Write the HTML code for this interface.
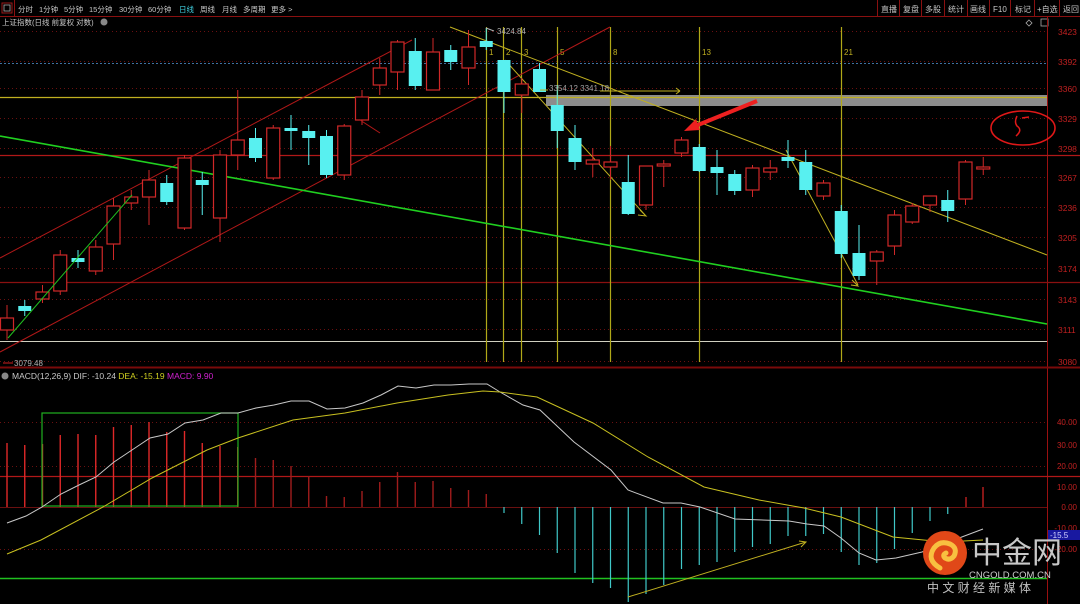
<!DOCTYPE html>
<html><head><meta charset="utf-8"><style>
html,body{margin:0;padding:0;background:#000;width:1080px;height:604px;overflow:hidden;font-family:"Liberation Sans","Noto Sans CJK SC",sans-serif}
svg{position:absolute;left:0;top:0}
</style></head><body>
<svg id="s" width="1080" height="604" xmlns="http://www.w3.org/2000/svg" font-family="Liberation Sans, Noto Sans CJK SC, sans-serif">
<rect width="1080" height="604" fill="#000"/>
<line x1="0" y1="16.5" x2="1080" y2="16.5" stroke="#8a1010"/>
<rect x="2" y="3" width="10" height="10" fill="none" stroke="#9a1a1a"/>
<rect x="4" y="5" width="6" height="6" fill="none" stroke="#aaa" stroke-width="0.8"/>
<line x1="14.5" y1="0" x2="14.5" y2="16" stroke="#8a1010"/>
<g font-size="7.5" fill="#c8c8c8">
<text x="18" y="12">分时</text><text x="39" y="12">1分钟</text><text x="64" y="12">5分钟</text><text x="89" y="12">15分钟</text><text x="119" y="12">30分钟</text><text x="148" y="12">60分钟</text><text x="179" y="12" fill="#40d0e0">日线</text><text x="200" y="12">周线</text><text x="222" y="12">月线</text><text x="243" y="12">多周期</text><text x="271" y="12">更多 &gt;</text>
<text x="2" y="25">上证指数(日线 前复权 对数)</text>
</g>
<circle cx="104" cy="22" r="3.5" fill="#888"/>
<g font-size="8" fill="#c8c8c8">
<text x="881" y="12">直播</text><text x="903" y="12">复盘</text><text x="925" y="12">多股</text><text x="948" y="12">统计</text><text x="970" y="12">画线</text><text x="993" y="12">F10</text><text x="1015" y="12">标记</text><text x="1037" y="12">+自选</text><text x="1063" y="12">返回</text>
</g>
<g stroke="#8a1010"><line x1="877.5" y1="0" x2="877.5" y2="16"/><line x1="899.5" y1="0" x2="899.5" y2="16"/><line x1="921.5" y1="0" x2="921.5" y2="16"/><line x1="944.5" y1="0" x2="944.5" y2="16"/><line x1="967.5" y1="0" x2="967.5" y2="16"/><line x1="989.5" y1="0" x2="989.5" y2="16"/><line x1="1010.5" y1="0" x2="1010.5" y2="16"/><line x1="1034.5" y1="0" x2="1034.5" y2="16"/><line x1="1059.5" y1="0" x2="1059.5" y2="16"/></g>
<path d="M1029 20 l3 3 -3 3 -3 -3z" fill="none" stroke="#aaa" stroke-width="0.8"/>
<rect x="1041" y="19" width="7" height="7" fill="none" stroke="#aaa" stroke-width="0.8"/>
<g id="grid"></g>
<g id="g"></g>
</svg>
<script>
var NS="http://www.w3.org/2000/svg",G=document.getElementById('g'),GR=document.getElementById('grid');
function el(t,a,p){var e=document.createElementNS(NS,t);for(var k in a)e.setAttribute(k,a[k]);(p||G).appendChild(e);return e}
function L(x1,y1,x2,y2,c,w,d,p){var a={x1:x1,y1:y1,x2:x2,y2:y2,stroke:c,'stroke-width':w||1};if(d)a['stroke-dasharray']=d;return el('line',a,p)}
function T(x,y,s,c,fs,anc){var e=el('text',{x:x,y:y,fill:c,'font-size':fs||9});if(anc)e.setAttribute('text-anchor',anc);e.textContent=s;return e}
L(1047.5,17,1047.5,604,'#9a1010',1,null,GR);
L(0,367.5,1080,367.5,'#7a0a0a',2,null,GR);
var ax=[[3423,31],[3392,61],[3360,88],[3329,118],[3298,148],[3267,177],[3236,207],[3205,237],[3174,268],[3143,299],[3111,329],[3080,361]];
ax.forEach(function(a){L(0,a[1]+0.5,1047,a[1]+0.5,'#6a1010',1,'1,3',GR);T(1058,a[1]+4,a[0],'#c02020',8.5)});
L(0,63.5,1047,63.5,'#4070a0',1,'2,2',GR);
L(0,155.5,1080,155.5,'#b01818',1.2,null,GR);
L(0,282.5,1080,282.5,'#8a1010',1.2,null,GR);
L(0,341.5,1047,341.5,'#d0d0c0',1,null,GR);
el('rect',{x:546,y:95,width:501,height:11,fill:'#8c8c8c'},GR);
L(0,97.5,1047,97.5,'#c0b020',1.2,null,GR);
[[486,'1'],[503,'2'],[521,'3'],[557,'5'],[610,'8'],[699,'13'],[841,'21']].forEach(function(v){L(v[0]+0.5,27,v[0]+0.5,362,'#b0a818',1.2);T(v[0]+3,55,v[1],'#c0b020',8)});
L(0,258,412,40,'#b01818',1);L(0,352,610,27,'#b01818',1);
L(0,136,1047,324,'#20d020',1.6);
L(450,27,1047,255,'#c0b020',1);
L(505,60,645,215,'#c0b020',1);
L(786,150,858,285,'#c0b020',1);
var C=[[318,330,'r',305,340],[306,311,'c',300,316],[292,299,'r',285,303],[255,291,'r',250,295],[258,262,'c',250,268],[247,271,'r',240,275],[206,244,'r',198,260],[197,203,'r',190,210],[180,197,'r',170,225],[183,202,'c',175,205],[158,228,'r',155,230],[180,185,'c',172,215],[155,218,'r',150,242],[140,155,'r',90,170],[138,158,'c',128,162],[128,178,'r',125,180],[128,131,'c',115,150],[131,138,'c',125,165],[136,175,'c',130,178],[126,175,'r',124,180],[97,120,'r',90,125],[68,85,'r',58,95],[42,72,'r',40,90],[51,86,'c',38,90],[52,90,'r',38,90],[50,62,'c',45,70],[47,68,'r',30,85],[41,47,'c',28,50],[60,92,'c',60,113],[84,95,'r',78,113],[69,92,'c',63,92],[105,131,'c',85,148],[138,162,'c',125,170],[160,164,'r',148,177],[162,167,'r',146,180],[182,214,'c',155,215],[166,205,'r',166,210],[164,166,'r',160,187],[140,153,'r',137,157],[147,171,'c',144,172],[167,173,'c',150,195],[174,191,'c',170,195],[168,190,'r',165,197],[168,172,'r',160,180],[157,161,'c',140,168],[162,190,'c',150,195],[183,196,'r',180,200],[211,254,'c',205,258],[253,276,'c',225,280],[252,261,'r',250,285],[215,246,'r',210,255],[206,222,'r',203,224],[196,205,'r',196,212],[200,211,'c',190,222],[162,199,'r',160,205],[167,169,'r',157,175]];
C.forEach(function(c,i){var x=7+17.75*i,col=c[2]=='r'?'#d02828':'#58f0f0';
L(x,c[3],x,c[4],col,1);
if(c[2]=='r')el('rect',{x:x-6.5,y:c[0],width:13,height:Math.max(c[1]-c[0],1),fill:'#000',stroke:col,'stroke-width':1.2});
else el('rect',{x:x-6.5,y:c[0],width:13,height:Math.max(c[1]-c[0],2),fill:col});});
T(497,34,'3424.84','#b0b0b0',8);L(486,28,494,31,'#b0b0b0',1);
T(549,91,'3354.12  3341.18','#a0a0a0',8);L(540,90,548,90,'#c0b020',1);L(600,91,680,91,'#c0b020',1);L(676,88,680,91,'#c0b020',1);L(676,94,680,91,'#c0b020',1);
T(14,366,'3079.48','#b0b0b0',8);L(3,363,13,363,'#d02020',1);
L(8,338,132,195,'#20c020',1);L(360,120,380,133,'#b01818',1);
el('path',{d:'M757 101 L693 127',stroke:'#ee2020','stroke-width':4,fill:'none'});
el('path',{d:'M684 131 L696 119 L700 130z',fill:'#ee2020'});
el('ellipse',{cx:1023,cy:128,rx:32,ry:17,fill:'none',stroke:'#e01818','stroke-width':1.6});
el('path',{d:'M1017 116 q-3 6 0 10 q6 4 -1 10 M1022 118 l7 -1',stroke:'#e01818','stroke-width':1.5,fill:'none'});
el('path',{d:'M640 210 L646 216 L638 215',stroke:'#c0b020',fill:'none'});
el('path',{d:'M852 280 L858 286 L851 285',stroke:'#c0b020',fill:'none'});
el('circle',{cx:5,cy:376,r:3.5,fill:'#888'});
var t=el('text',{x:12,y:379,'font-size':8.5,fill:'#c8c8c8'});t.innerHTML='MACD(12,26,9) DIF: -10.24 <tspan fill="#d0d020">DEA: -15.19</tspan> <tspan fill="#d020d0">MACD: 9.90</tspan>';
[[422,'40.00'],[445,'30.00'],[466,'20.00'],[487,'10.00'],[507,'0.00'],[528,'-10.00'],[549,'-20.00']].forEach(function(a){if(a[1]!=='30.00'&&a[1]!=='10.00'&&a[1]!=='-10.00')L(0,a[0]+0.5,1047,a[0]+0.5,'#6a1010',1,'1,3',GR);T(1077,a[0]+3,a[1],'#c02020',8,'end')});
L(0,476.5,1080,476.5,'#b01818',1.2,null,GR);
L(0,578.5,1047,578.5,'#20c020',1.4,null,GR);
el('rect',{x:1048,y:530,width:32,height:10,fill:'#1818a0'});T(1050,538,'-15.5','#d0d0ff',8);
var rt=[443,445,444,435,434,435,427,425,422,432,431,443,446,447,458,460,466,476,496,497,491,482,472,482,481,488,490,494];
rt.forEach(function(y,i){var x=7+17.75*i;L(x,y,x,507,i<14?'#e02828':'#a01c1c',1.4)});
var cb=[513,524,535,553,573,583,588,602,594,585,569,565,562,552,547,544,536,536,534,552,565,563,549,533,521,514];
cb.forEach(function(y,i){var x=7+17.75*(i+28);L(x,507,x,y,'#40c8c8',1.2)});
L(966,497,966,507,'#c02020',1.4);L(983,487,983,507,'#c02020',1.4);
L(0,507.5,1047,507.5,'#6a1010',1,null,GR);
el('rect',{x:42,y:413,width:196,height:93,fill:'none',stroke:'#20b020','stroke-width':1.2});
el('polyline',{points:'7,523 26,516 42,507 61,494 79,485 96,477 114,462 132,450 150,438 168,434 185,423 203,420 221,413 238,413 256,408 274,405 291,401 309,401 327,409 345,408 363,403 381,395 398,386 416,388 434,385 451,385 469,384 487,384 500,392 523,405 540,410 574,442 611,470 628,490 663,503 681,503 700,507 735,519 789,521 807,524 824,526 841,538 859,553 876,560 896,558 922,552 983,529',fill:'none',stroke:'#c8c8c8','stroke-width':1});
el('polyline',{points:'7,554 41,540 103,507 152,478 207,450 238,438 293,420 345,413 397,403 448,395 483,391 500,392 537,397 593,423 648,457 704,487 759,500 804,508 841,517 893,537 944,542 983,540',fill:'none',stroke:'#c8c020','stroke-width':1});
L(628,597,806,542,'#c0b020',1);el('path',{d:'M799 541 L806 542 L801 547',stroke:'#c0b020',fill:'none'});
el('circle',{cx:945,cy:553,r:22,fill:'#e04818'});
el('path',{d:'M940 568 q-14 -8 -6 -20 q6 -8 16 -4 q8 4 4 12 q-4 5 -9 2 q-3 -3 1 -5',stroke:'#f8c040','stroke-width':5,fill:'none','stroke-linecap':'round'});
T(972,563,'中金网','#c8c8c8',30);
T(969,578,'CNGOLD.COM.CN','#d0d0d0',9.5);
T(927,592,'中 文 财 经 新 媒 体','#c0c0c0',12);
</script>
</body></html>
